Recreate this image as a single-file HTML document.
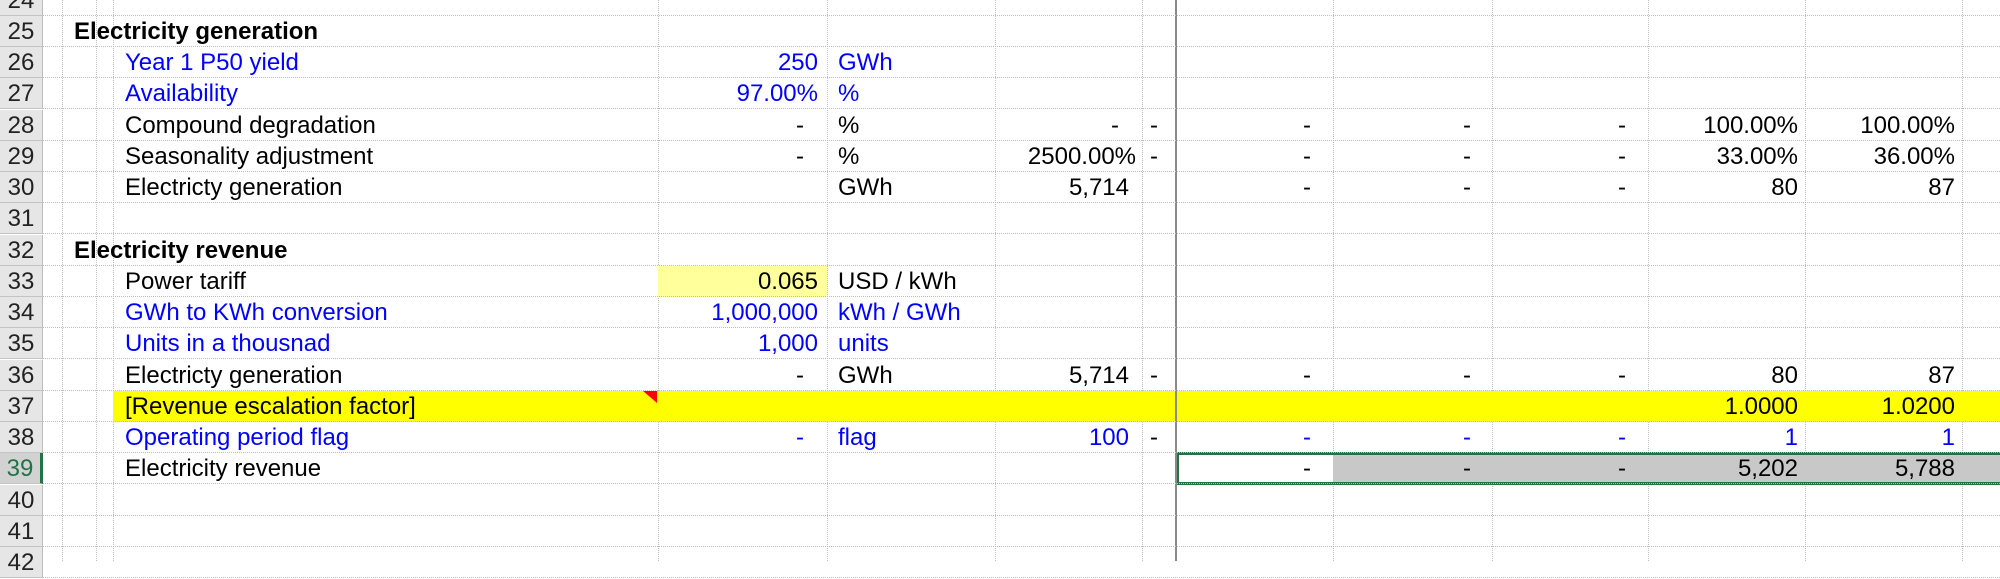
<!DOCTYPE html>
<html><head><meta charset="utf-8"><style>
body{margin:0;width:2000px;height:561px;overflow:hidden;background:#fff;position:relative;font-family:"Liberation Sans",Arial,sans-serif;font-size:24px;}
.r{position:absolute;left:0;width:2000px;height:31px;border-bottom:1px dotted #bdbdbd;box-sizing:border-box;}
.h{position:absolute;left:0;width:43px;height:31px;background:#e6e6e6;border-bottom:1px solid #c4c4c4;border-right:1px solid #bdbdbd;box-sizing:border-box;text-align:center;line-height:32px;color:#222;font-size:24px;}
.v{position:absolute;top:0;height:561px;border-left:1px dotted #bdbdbd;}
.t{position:absolute;line-height:32px;white-space:nowrap;}
.b{color:#0000ff}
.bd{font-weight:bold}
</style></head><body>
<div class="v" style="left:62px"></div>
<div class="v" style="left:96px"></div>
<div class="v" style="left:113px"></div>
<div class="v" style="left:658px"></div>
<div class="v" style="left:827px"></div>
<div class="v" style="left:995px"></div>
<div class="v" style="left:1142px"></div>
<div class="v" style="left:1333px"></div>
<div class="v" style="left:1492px"></div>
<div class="v" style="left:1648px"></div>
<div class="v" style="left:1805px"></div>
<div class="v" style="left:1962px"></div>

<div style="position:absolute;left:658px;top:266px;width:169px;height:31px;background:#ffff9c"></div>
<div style="position:absolute;left:113px;top:391px;width:1887px;height:31px;background:#ffff00"></div>
<div style="position:absolute;left:643px;top:391px;width:0;height:0;border-left:14px solid transparent;border-top:12px solid #ff0000;"></div>
<div style="position:absolute;left:1333px;top:453px;width:667px;height:31px;background:#c8c8c8"></div>
<div style="position:absolute;left:1176px;top:452px;width:830px;height:33px;border:3px solid #217346;box-sizing:border-box"></div>
<div style="position:absolute;left:1175px;top:0;width:2px;height:561px;background:#8a8a8a"></div>

<div class="r" style="top:-15px"></div><div class="h" style="top:-15px">24</div>
<div class="r" style="top:16px"></div><div class="h" style="top:16px">25</div>
<div class="r" style="top:47px"></div><div class="h" style="top:47px">26</div>
<div class="r" style="top:78px"></div><div class="h" style="top:78px">27</div>
<div class="r" style="top:110px"></div><div class="h" style="top:110px">28</div>
<div class="r" style="top:141px"></div><div class="h" style="top:141px">29</div>
<div class="r" style="top:172px"></div><div class="h" style="top:172px">30</div>
<div class="r" style="top:203px"></div><div class="h" style="top:203px">31</div>
<div class="r" style="top:235px"></div><div class="h" style="top:235px">32</div>
<div class="r" style="top:266px"></div><div class="h" style="top:266px">33</div>
<div class="r" style="top:297px"></div><div class="h" style="top:297px">34</div>
<div class="r" style="top:328px"></div><div class="h" style="top:328px">35</div>
<div class="r" style="top:360px"></div><div class="h" style="top:360px">36</div>
<div class="r" style="top:391px"></div><div class="h" style="top:391px">37</div>
<div class="r" style="top:422px"></div><div class="h" style="top:422px">38</div>
<div class="r" style="top:453px"></div><div class="h" style="top:453px;color:#217346;border-right:3px solid #217346;background:#d2d2d2">39</div>
<div class="r" style="top:485px"></div><div class="h" style="top:485px">40</div>
<div class="r" style="top:516px"></div><div class="h" style="top:516px">41</div>
<div class="r" style="top:547px"></div><div class="h" style="top:547px">42</div>

<div class="t bd" style="left:74px;top:16px">Electricity generation</div>
<div class="t b" style="left:125px;top:47px">Year 1 P50 yield</div>
<div class="t b" style="right:1182px;top:47px">250</div>
<div class="t b" style="left:838px;top:47px">GWh</div>
<div class="t b" style="left:125px;top:78px">Availability</div>
<div class="t b" style="right:1182px;top:78px">97.00%</div>
<div class="t b" style="left:838px;top:78px">%</div>
<div class="t" style="left:125px;top:110px">Compound degradation</div>
<div class="t" style="right:1196px;top:110px">-</div>
<div class="t" style="left:838px;top:110px">%</div>
<div class="t" style="right:881px;top:110px">-</div>
<div class="t" style="left:1150px;top:110px">-</div>
<div class="t" style="right:689px;top:110px">-</div>
<div class="t" style="right:529px;top:110px">-</div>
<div class="t" style="right:374px;top:110px">-</div>
<div class="t" style="right:202px;top:110px">100.00%</div>
<div class="t" style="right:45px;top:110px">100.00%</div>
<div class="t" style="left:125px;top:141px">Seasonality adjustment</div>
<div class="t" style="right:1196px;top:141px">-</div>
<div class="t" style="left:838px;top:141px">%</div>
<div class="t" style="right:864px;top:141px">2500.00%</div>
<div class="t" style="left:1150px;top:141px">-</div>
<div class="t" style="right:689px;top:141px">-</div>
<div class="t" style="right:529px;top:141px">-</div>
<div class="t" style="right:374px;top:141px">-</div>
<div class="t" style="right:202px;top:141px">33.00%</div>
<div class="t" style="right:45px;top:141px">36.00%</div>
<div class="t" style="left:125px;top:172px">Electricty generation</div>
<div class="t" style="left:838px;top:172px">GWh</div>
<div class="t" style="right:871px;top:172px">5,714</div>
<div class="t" style="right:689px;top:172px">-</div>
<div class="t" style="right:529px;top:172px">-</div>
<div class="t" style="right:374px;top:172px">-</div>
<div class="t" style="right:202px;top:172px">80</div>
<div class="t" style="right:45px;top:172px">87</div>
<div class="t bd" style="left:74px;top:235px">Electricity revenue</div>
<div class="t" style="left:125px;top:266px">Power tariff</div>
<div class="t" style="right:1182px;top:266px">0.065</div>
<div class="t" style="left:838px;top:266px">USD / kWh</div>
<div class="t b" style="left:125px;top:297px">GWh to KWh conversion</div>
<div class="t b" style="right:1182px;top:297px">1,000,000</div>
<div class="t b" style="left:838px;top:297px">kWh / GWh</div>
<div class="t b" style="left:125px;top:328px">Units in a thousnad</div>
<div class="t b" style="right:1182px;top:328px">1,000</div>
<div class="t b" style="left:838px;top:328px">units</div>
<div class="t" style="left:125px;top:360px">Electricty generation</div>
<div class="t" style="right:1196px;top:360px">-</div>
<div class="t" style="left:838px;top:360px">GWh</div>
<div class="t" style="right:871px;top:360px">5,714</div>
<div class="t" style="left:1150px;top:360px">-</div>
<div class="t" style="right:689px;top:360px">-</div>
<div class="t" style="right:529px;top:360px">-</div>
<div class="t" style="right:374px;top:360px">-</div>
<div class="t" style="right:202px;top:360px">80</div>
<div class="t" style="right:45px;top:360px">87</div>
<div class="t" style="left:125px;top:391px">[Revenue escalation factor]</div>
<div class="t" style="right:202px;top:391px">1.0000</div>
<div class="t" style="right:45px;top:391px">1.0200</div>
<div class="t b" style="left:125px;top:422px">Operating period flag</div>
<div class="t b" style="right:1196px;top:422px">-</div>
<div class="t b" style="left:838px;top:422px">flag</div>
<div class="t b" style="right:871px;top:422px">100</div>
<div class="t" style="left:1150px;top:422px">-</div>
<div class="t b" style="right:689px;top:422px">-</div>
<div class="t b" style="right:529px;top:422px">-</div>
<div class="t b" style="right:374px;top:422px">-</div>
<div class="t b" style="right:202px;top:422px">1</div>
<div class="t b" style="right:45px;top:422px">1</div>
<div class="t" style="left:125px;top:453px">Electricity revenue</div>
<div class="t" style="right:689px;top:453px">-</div>
<div class="t" style="right:529px;top:453px">-</div>
<div class="t" style="right:374px;top:453px">-</div>
<div class="t" style="right:202px;top:453px">5,202</div>
<div class="t" style="right:45px;top:453px">5,788</div>
</body></html>
